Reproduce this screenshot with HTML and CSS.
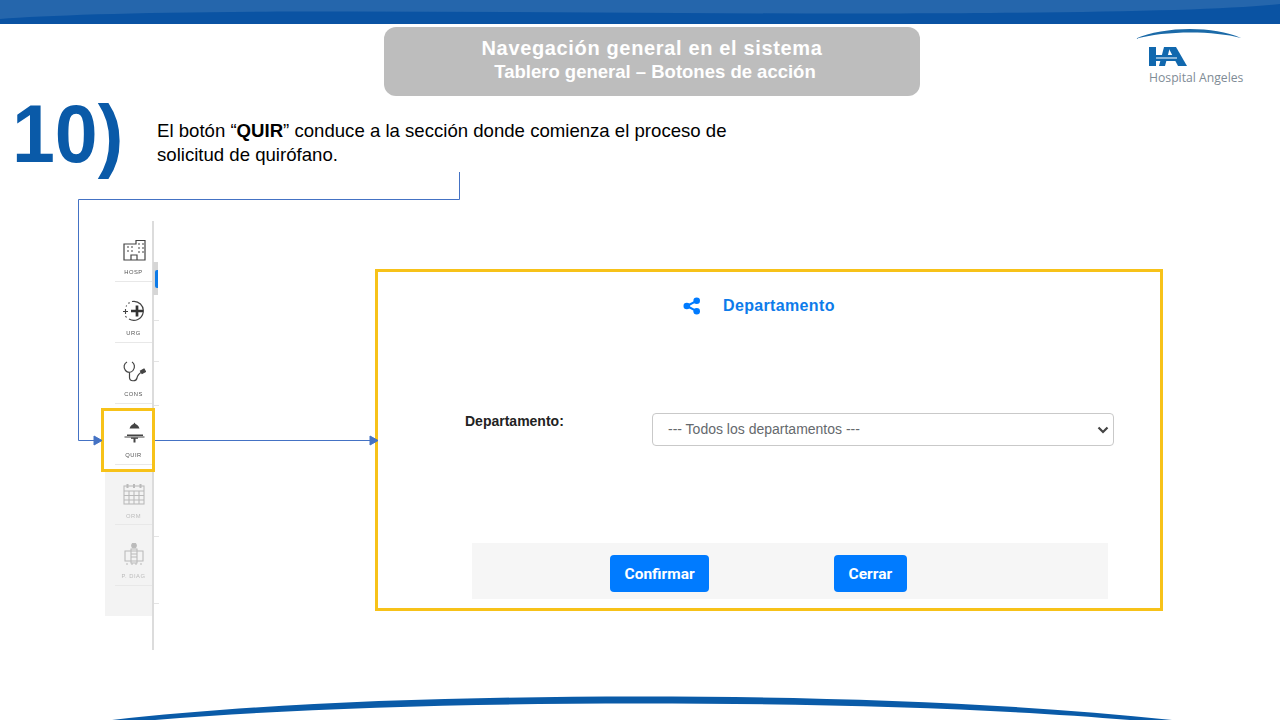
FILE: index.html
```html
<!DOCTYPE html>
<html lang="es">
<head>
    <meta charset="UTF-8">
    <title>Navegación general en el sistema</title>
    <link rel="stylesheet" href="styles.css">
</head>
<body>
    <div class="slide">
        <svg class="top-band" width="1280" height="24" viewBox="0 0 1280 24">
            <rect width="1280" height="24" fill="#0a53a3"/>
            <path d="M0 0H1280V4C1230 10 1100 13 900 13.5C700 14 500 11 300 11.5C150 12 50 15 0 19Z" fill="#2566ac"/>
        </svg>

        <div class="header">
            <div class="title-box">
                <div class="title-main">Navegación general en el sistema</div>
                <div class="title-sub">Tablero general – Botones de acción</div>
            </div>
            <div class="logo">
                <svg width="110" height="40" viewBox="0 0 110 40">
                    <path d="M0 12C30 -1 78 -1 106 11C78 3.500 30 3.500 0 12Z" fill="#1b6aa8"/>
                    <rect x="14" y="20" width="7" height="19" fill="#1168ae"/>
                    <path d="M29 20H35L30 39H24Z" fill="#1168ae"/>
                    <path d="M33 20H41L52 39H43Z" fill="#1168ae"/>
                    <rect x="21" y="28" width="21" height="6" fill="#1168ae"/>
                    <rect x="21" y="30.500" width="21" height="1" fill="#fff"/>
                </svg>
                <span class="logo-text">Hospital Angeles</span>
            </div>
        </div>

        <div class="intro">
            <div class="step">10)</div>
            <p class="intro-text">El botón “<b>QUIR</b>” conduce a la sección donde comienza el proceso de solicitud de quirófano.</p>
        </div>

        <div class="work">
            <div class="sidebar">
                <div class="nav-item">
                    <svg class="nav-icon" width="24" height="22" viewBox="0 0 24 22" fill="none" stroke="#444" stroke-width="1.2">
                        <path d="M2 21V5H14V1.500H23V21H2Z"/>
                        <path d="M9 21V16H15V21M5 8H7M9 8H11M16 5H18M20 5H22M5 12H7M9 12H11M16 9H18M20 9H22M16 13H18M20 13H22"/>
                    </svg>
                    <span class="nav-label">HOSP</span>
                </div>
                <div class="nav-item">
                    <svg class="nav-icon" width="24" height="22" viewBox="0 0 24 22" fill="none" stroke="#444" stroke-width="1.2">
                        <path d="M10 1.500A9.500 9.500 0 1 1 7 19"/>
                        <path d="M6.500 3.500L7.500 2.500M4 6.500L4.700 5.500M3.500 16L4.500 17.500" stroke-width="1.100"/>
                        <path d="M9 11H21M15 5.500V16.500" stroke="#333" stroke-width="2.700"/>
                        <path d="M1 11.500H6M3.500 9V14" stroke-width="1.100"/>
                    </svg>
                    <span class="nav-label">URG</span>
                </div>
                <div class="nav-item">
                    <svg class="nav-icon" width="24" height="22" viewBox="0 0 24 22" fill="none" stroke="#444" stroke-width="1.200">
                        <path d="M5 1C2 2.500 1 6.500 3.500 9.500C5.500 12 9 12 11 9.500C13.500 6.500 12.500 2.500 10 1"/>
                        <path d="M7.500 12V16.500C7.500 20.500 14 21 15 17C15.500 14 17 12.500 20 11"/>
                        <path d="M18.500 10L22 8L23.500 10.500L20 12.500Z" fill="#444"/>
                    </svg>
                    <span class="nav-label">CONS</span>
                </div>
                <div class="nav-item">
                    <svg class="nav-icon" width="24" height="22" viewBox="0 0 24 22" fill="#444">
                        <path d="M7.500 6.500C8.500 3.500 10.500 2.500 11.500 2L12.500 0.500L13.500 2C14.500 2.500 16.500 3.500 17.500 6.500Z"/>
                        <rect x="2.500" y="14.500" width="20" height="1"/>
                        <rect x="5" y="12.500" width="16" height="1.500"/>
                        <rect x="9" y="15.500" width="7" height="1.300"/>
                        <rect x="11.500" y="16" width="2" height="4.500"/>
                    </svg>
                    <span class="nav-label">QUIR</span>
                </div>
                <div class="nav-dim">
                    <div class="nav-item nav-item-first">
                        <svg class="nav-icon" width="24" height="22" viewBox="0 0 24 22" fill="none" stroke="#777" stroke-width="1.100">
                            <rect x="2" y="3" width="20" height="18"/>
                            <path d="M2 8H22M2 12.500H22M2 17H22M7 8V21M12 8V21M17 8V21"/>
                            <path d="M5.500 5V1M12 5V1M18.500 5V1" stroke-width="2"/>
                        </svg>
                        <span class="nav-label">ORM</span>
                    </div>
                    <div class="nav-item">
                        <svg class="nav-icon" width="24" height="22" viewBox="0 0 24 22" fill="none" stroke="#777" stroke-width="1.100">
                            <circle cx="12" cy="2.500" r="2.300" fill="#777"/>
                            <path d="M3 8H21V18H3ZM9 6H15V20H9ZM9 11H15M9 14H15"/>
                            <path d="M4 21H6M9 21H11M13 21H15M18 21H20"/>
                        </svg>
                        <span class="nav-label">P. DIAG</span>
                    </div>
                </div>
                <div class="rail-thumb"><div class="rail-handle"></div></div>
                <div class="rail-tick tick-a"></div>
                <div class="rail-tick tick-b"></div>
                <div class="rail-tick tick-c"></div>
                <div class="rail-tick tick-d"></div>
                <div class="rail-tick tick-e"></div>
                <div class="quir-mark"></div>
            </div>

            <div class="dialog">
                <div class="dialog-head">
                    <svg width="18" height="18" viewBox="0 0 18 18" fill="#007bff">
                        <circle cx="3.800" cy="9" r="3.300"/>
                        <circle cx="13.700" cy="3.800" r="3.300"/>
                        <circle cx="13.700" cy="14.200" r="3.300"/>
                        <path d="M3.800 9L13.700 3.800M3.800 9L13.700 14.200" stroke="#007bff" stroke-width="2"/>
                    </svg>
                    <span class="dialog-title">Departamento</span>
                </div>
                <div class="field">
                    <label class="field-label">Departamento:</label>
                    <div class="select-wrap">
                        <select class="field-select">
                            <option>--- Todos los departamentos ---</option>
                        </select>
                        <svg class="select-arrow" width="12" height="8" viewBox="0 0 12 8" fill="none" stroke="#444" stroke-width="2.200">
                            <path d="M1.500 1.500L6 6L10.500 1.500"/>
                        </svg>
                    </div>
                </div>
                <div class="dialog-foot">
                    <button class="btn">Confirmar</button>
                    <button class="btn">Cerrar</button>
                </div>
            </div>
        </div>

        <svg class="bottom-arc" width="1280" height="24" viewBox="0 0 1280 24">
            <path d="M112 24C260 7 450 0.500 640 0.500C830 0.500 1010 7 1172 24H1130C1000 13 830 7.500 640 7.500C450 7.500 290 13 155 24Z" fill="#0a5ba8"/>
        </svg>

        <svg class="connectors" width="1280" height="720" viewBox="0 0 1280 720" fill="none" stroke="#4472c4">
            <path d="M459.500 172V199.500H78.500V440.500H95"/>
            <path d="M94 436L102 440.500L94 445Z" fill="#4472c4"/>
            <path d="M155 440.500H371"/>
            <path d="M370 436L378 440.500L370 445Z" fill="#4472c4"/>
        </svg>
    </div>
</body>
</html>
```
FILE: styles.css
```css
body {
    margin: 0;
    background: #fff;
    font-family: "Liberation Sans", Arial, sans-serif;
}
.slide {
    position: relative;
    width: 1280px;
    height: 720px;
    overflow: hidden;
    display: flex;
    flex-direction: column;
    background: #fff;
}
.top-band {
    display: block;
    flex: none;
}
.header {
    display: flex;
    align-items: flex-start;
    padding: 3px 0 0 384px;
    height: 69px;
}
.title-box {
    width: 536px;
    height: 69px;
    box-sizing: border-box;
    padding-top: 9px;
    background: #bdbdbd;
    border-radius: 12px;
    color: #fff;
    font-weight: bold;
    text-align: center;
}
.title-main {
    font-size: 20px;
    line-height: 25px;
    letter-spacing: 0.65px;
}
.title-sub {
    font-size: 18.500px;
    line-height: 22px;
    padding-left: 6px;
}
.logo {
    margin-left: 215px;
    display: flex;
    flex-direction: column;
    width: 110px;
}
.logo svg {
    display: block;
}
.logo-text {
    margin-top: 2px;
    font-family: "Open Sans", sans-serif;
    font-size: 12.200px;
    line-height: 18px;
    padding-left: 14px;
    color: #7f8c96;
    white-space: nowrap;
}
.intro {
    display: flex;
    align-items: flex-start;
    height: 125px;
    flex: none;
}
.step {
    width: 157px;
    padding-left: 12px;
    box-sizing: border-box;
    font-size: 82px;
    font-weight: bold;
    line-height: 76px;
    color: #0a5aa8;
    transform: scaleX(0.94);
    transform-origin: 12px 0;
}
.intro-text {
    width: 590px;
    margin: 23px 0 0;
    font-size: 18.600px;
    line-height: 24px;
    color: #000;
}
.work {
    display: flex;
    align-items: flex-start;
    padding-left: 105px;
}
.sidebar {
    position: relative;
    width: 47px;
    height: 429px;
    border-right: 2px solid #dcdcdc;
    flex: none;
}
.nav-item {
    height: 61px;
    box-sizing: border-box;
    margin-left: 10px;
    padding-top: 18px;
    border-bottom: 1px solid #e8e8e8;
    display: flex;
    flex-direction: column;
    align-items: center;
}
.nav-item-first {
    height: 54px;
    padding-top: 12px;
}
.nav-icon {
    display: block;
    flex: none;
    filter: blur(0.3px);
}
.nav-label {
    margin-top: 7px;
    font-size: 5.800px;
    line-height: 8px;
    letter-spacing: 0.5px;
    color: #555;
    white-space: nowrap;
    filter: blur(0.3px);
}
.nav-dim {
    margin-top: 6px;
    height: 145px;
    background: #f3f3f3;
}
.nav-dim .nav-icon,
.nav-dim .nav-label {
    opacity: 0.45;
}
.nav-dim .nav-label {
    color: #777;
}
.rail-thumb {
    position: absolute;
    top: 41px;
    left: 48px;
    width: 5px;
    height: 33px;
    background: #d6d6d6;
}
.rail-handle {
    margin: 8px 0 0 2px;
    width: 3px;
    height: 18px;
    background: #0d7be8;
    border-radius: 2px 0 0 2px;
}
.rail-tick {
    position: absolute;
    left: 49px;
    width: 5px;
    height: 1px;
    background: #e4e4e4;
}
.tick-a { top: 99px; }
.tick-b { top: 140px; }
.tick-c { top: 184px; }
.tick-d { top: 315px; }
.tick-e { top: 382px; }
.quir-mark {
    position: absolute;
    top: 187px;
    left: -4px;
    width: 48px;
    height: 58px;
    border: 3px solid #f7c219;
}
.dialog {
    margin: 48px 0 0 221px;
    width: 782px;
    height: 336px;
    border: 3px solid #f7c219;
    display: flex;
    flex-direction: column;
    align-items: flex-start;
    flex: none;
}
.dialog-head {
    display: flex;
    align-items: center;
    gap: 22px;
    margin: 24px 0 0 305px;
}
.dialog-title {
    font-size: 16px;
    font-weight: bold;
    line-height: 20px;
    letter-spacing: 0.35px;
    color: #0d7bea;
}
.field {
    display: flex;
    align-items: flex-start;
    margin: 96px 0 0 87px;
}
.field-label {
    width: 187px;
    font-size: 14px;
    font-weight: bold;
    line-height: 18px;
    color: #222;
}
.select-wrap {
    position: relative;
    margin-top: 1px;
}
.field-select {
    display: block;
    width: 462px;
    height: 33px;
    box-sizing: border-box;
    padding: 0 0 2px 15px;
    border: 1px solid #c9c9c9;
    border-radius: 4px;
    background: #fff;
    font-family: "Liberation Sans", Arial, sans-serif;
    font-size: 14px;
    color: #65696d;
    appearance: none;
}
.select-arrow {
    position: absolute;
    top: 13px;
    right: 5px;
}
.dialog-foot {
    display: flex;
    align-items: center;
    gap: 125px;
    width: 636px;
    height: 56px;
    box-sizing: border-box;
    margin: 97px 0 0 94px;
    padding: 5px 0 0 138px;
    background: #f6f6f6;
}
.btn {
    height: 37px;
    padding: 0 14.500px;
    border: none;
    border-radius: 4px;
    background: #007bff;
    color: #fff;
    font-family: Roboto, sans-serif;
    font-size: 15.500px;
    font-weight: bold;
}
.bottom-arc {
    display: block;
    margin-top: auto;
    flex: none;
    filter: blur(0.4px);
}
.connectors {
    position: absolute;
    top: 0;
    left: 0;
    pointer-events: none;
}
```
